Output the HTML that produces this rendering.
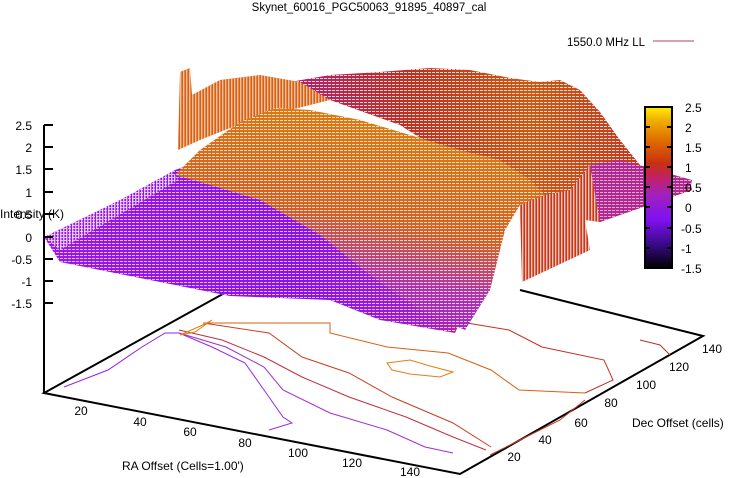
<!DOCTYPE html>
<html><head><meta charset="utf-8"><style>
html,body{margin:0;padding:0;background:#fff;}
svg{display:block;font-family:"Liberation Sans",sans-serif;}
</style></head><body>
<svg width="738" height="478" viewBox="0 0 738 478" xmlns="http://www.w3.org/2000/svg">
<defs>
<linearGradient id="cb" x1="0" y1="1" x2="0" y2="0">
<stop offset="0" stop-color="#000"/>
<stop offset="0.15" stop-color="#3a0a8a"/>
<stop offset="0.3" stop-color="#8010f0"/>
<stop offset="0.45" stop-color="#a020c0"/>
<stop offset="0.55" stop-color="#c02070"/>
<stop offset="0.65" stop-color="#c83010"/>
<stop offset="0.8" stop-color="#e07000"/>
<stop offset="0.92" stop-color="#f0b000"/>
<stop offset="1" stop-color="#ffee00"/>
</linearGradient>
<linearGradient id="purp" x1="0" y1="0" x2="1" y2="0">
<stop offset="0" stop-color="#9a18e8"/>
<stop offset="0.6" stop-color="#8a10f0"/>
<stop offset="0.9" stop-color="#a020c8"/>
<stop offset="1" stop-color="#c02880"/>
</linearGradient>
<linearGradient id="dome" x1="0" y1="1" x2="0.3" y2="0">
<stop offset="0" stop-color="#9018e0"/>
<stop offset="0.35" stop-color="#b030b0"/>
<stop offset="0.6" stop-color="#d86020"/>
<stop offset="1" stop-color="#e07810"/>
</linearGradient>
<linearGradient id="back" x1="0" y1="0" x2="1" y2="0">
<stop offset="0" stop-color="#b02070"/>
<stop offset="0.3" stop-color="#c03020"/>
<stop offset="0.6" stop-color="#d05810"/>
<stop offset="1" stop-color="#c02828"/>
</linearGradient>
<pattern id="mesh" width="4" height="3" patternUnits="userSpaceOnUse">
<rect x="0" y="0" width="3" height="1" fill="#fff"/>
</pattern>
<pattern id="vmesh" width="3" height="4" patternUnits="userSpaceOnUse">
<rect x="0" y="0" width="1.4" height="4" fill="#fff"/>
</pattern>
</defs>

<text x="369" y="11" font-size="11.5" text-anchor="middle">Skynet_60016_PGC50063_91895_40897_cal</text>
<text x="645" y="46" font-size="11.5" text-anchor="end">1550.0 MHz LL</text>
<line x1="653" y1="41" x2="694" y2="41" stroke="#b04060" stroke-width="1"/>

<polyline points="230,290 44,393 460,474 703,336 520,290" fill="none" stroke="#000" stroke-width="2"/>

<g fill="none" stroke-width="1">
<path d="M64,387 L108,370 142,347 165,333 179,333" stroke="#9020f0"/>
<path d="M179,333 L212,347 245,363 264,390 283,417 292,423 269,430" stroke="#9a28e0"/>
<path d="M179,333 L226,347 264,367 283,390 330,413 387,430 425,447 453,453" stroke="#a030d0"/>
<path d="M179,330 L222,340 264,357 302,377 349,397 406,417 453,437 486,450" stroke="#c03040"/>
<path d="M203,323 L269,333 302,357 349,373 392,397 453,423 491,447" stroke="#c84020"/>
<path d="M203,323 L330,323 330,333 387,347 448,353 491,370 519,390 585,393" stroke="#d86010"/>
<path d="M467,323 L509,330 542,347 604,360 613,380 585,393" stroke="#c83020"/>
<path d="M387,363 L410,360 430,366 453,372 440,377 410,374 392,370Z" stroke="#e08010"/>
<path d="M180,335 L205,324 212,320 195,332Z" stroke="#e08010"/>
<path d="M490,455 L520,440 560,420 585,400" stroke="#c84020"/>
<path d="M640,340 L660,345 670,355" stroke="#c03030"/>
</g>

<polygon points="290,82 330,75 380,72 430,68 470,70 510,78 540,82 560,80 580,90 600,112 620,140 640,165 690,180 692,190 600,222 560,210 520,200 470,170 400,125 330,100" fill="url(#back)"/>
<polygon points="290,82 330,75 380,72 430,68 470,70 510,78 540,82 560,80 580,90 600,112 620,140 640,165 690,180 692,190 600,222 560,210 520,200 470,170 400,125 330,100" fill="url(#mesh)" opacity="0.8"/>
<polygon points="178,150 180,72 190,68 192,95 220,80 260,75 300,82 330,100 250,120 200,140" fill="#d86010"/>
<polygon points="178,150 180,72 190,68 192,95 220,80 260,75 300,82 330,100 250,120 200,140" fill="url(#vmesh)" opacity="0.6"/>
<polygon points="44,237 120,200 175,170 260,140 320,160 400,230 470,300 455,333 380,320 330,300 230,296 200,290 60,262" fill="url(#purp)"/>
<polygon points="44,237 120,200 175,170 260,140 320,160 400,230 470,300 455,333 380,320 330,300 230,296 200,290 60,262" fill="url(#mesh)" opacity="0.7"/>
<polygon points="44,237 170,168 178,180 60,250" fill="url(#vmesh)" opacity="0.7"/>
<polygon points="175,175 200,150 240,122 275,108 310,110 360,120 410,135 460,150 500,160 530,180 545,195 520,205 505,230 490,290 465,330 420,310 370,275 320,235 260,200 210,185" fill="url(#dome)"/>
<polygon points="175,175 200,150 240,122 275,108 310,110 360,120 410,135 460,150 500,160 530,180 545,195 520,205 505,230 490,290 465,330 420,310 370,275 320,235 260,200 210,185" fill="url(#mesh)" opacity="0.75"/>
<polygon points="520,205 522,282 590,250 585,220 600,222 590,165 570,190 545,195" fill="#c83818"/>
<polygon points="520,205 522,282 590,250 585,220 600,222 590,165 570,190 545,195" fill="url(#vmesh)" opacity="0.7"/>
<polygon points="600,222 690,190 692,180 620,160 590,165" fill="#b02890"/>
<polygon points="600,222 690,190 692,180 620,160 590,165" fill="url(#mesh)" opacity="0.6"/>

<line x1="44" y1="125" x2="44" y2="393" stroke="#000" stroke-width="2"/>
<g stroke="#000" stroke-width="2">
<line x1="44" y1="125" x2="53" y2="125"/><line x1="44" y1="147" x2="53" y2="147"/>
<line x1="44" y1="169" x2="53" y2="169"/><line x1="44" y1="192" x2="53" y2="192"/>
<line x1="44" y1="214" x2="53" y2="214"/><line x1="44" y1="237" x2="53" y2="237"/>
<line x1="44" y1="259" x2="53" y2="259"/><line x1="44" y1="281" x2="53" y2="281"/>
<line x1="44" y1="303" x2="53" y2="303"/>
</g>
<g font-size="12" text-anchor="end">
<text x="32" y="130">2.5</text><text x="32" y="152">2</text><text x="32" y="174">1.5</text>
<text x="32" y="197">1</text><text x="32" y="219">0.5</text><text x="32" y="242">0</text>
<text x="32" y="264">-0.5</text><text x="32" y="286">-1</text><text x="32" y="308">-1.5</text>
</g>
<text x="0" y="218" font-size="12">Intensity (K)</text>

<g font-size="12" text-anchor="middle">
<text x="81" y="415">20</text><text x="140" y="426">40</text><text x="190" y="436">60</text>
<text x="245" y="447">80</text><text x="298" y="457">100</text><text x="352" y="467">120</text>
<text x="410" y="476">140</text>
</g>
<text x="122" y="470" font-size="12">RA Offset (Cells=1.00')</text>
<g font-size="12" text-anchor="middle">
<text x="514" y="461">20</text><text x="545" y="444">40</text><text x="581" y="427">60</text>
<text x="611" y="407">80</text><text x="646" y="389">100</text><text x="679" y="371">120</text>
<text x="712" y="353">140</text>
</g>
<text x="632" y="427" font-size="12">Dec Offset (cells)</text>

<rect x="645" y="107" width="27" height="161" fill="url(#cb)" stroke="#000" stroke-width="2"/>
<g stroke="#000" stroke-width="2">
<line x1="645" y1="127" x2="650" y2="127"/><line x1="667" y1="127" x2="672" y2="127"/>
<line x1="645" y1="147" x2="650" y2="147"/><line x1="667" y1="147" x2="672" y2="147"/>
<line x1="645" y1="167" x2="650" y2="167"/><line x1="667" y1="167" x2="672" y2="167"/>
<line x1="645" y1="187" x2="650" y2="187"/><line x1="667" y1="187" x2="672" y2="187"/>
<line x1="645" y1="207" x2="650" y2="207"/><line x1="667" y1="207" x2="672" y2="207"/>
<line x1="645" y1="228" x2="650" y2="228"/><line x1="667" y1="228" x2="672" y2="228"/>
<line x1="645" y1="248" x2="650" y2="248"/><line x1="667" y1="248" x2="672" y2="248"/>
</g>
<g font-size="12">
<text x="685" y="112">2.5</text><text x="685" y="132">2</text><text x="685" y="152">1.5</text>
<text x="685" y="172">1</text><text x="685" y="192">0.5</text><text x="685" y="212">0</text>
<text x="681" y="233">-0.5</text><text x="681" y="253">-1</text><text x="681" y="273">-1.5</text>
</g>
</svg>
</body></html>
